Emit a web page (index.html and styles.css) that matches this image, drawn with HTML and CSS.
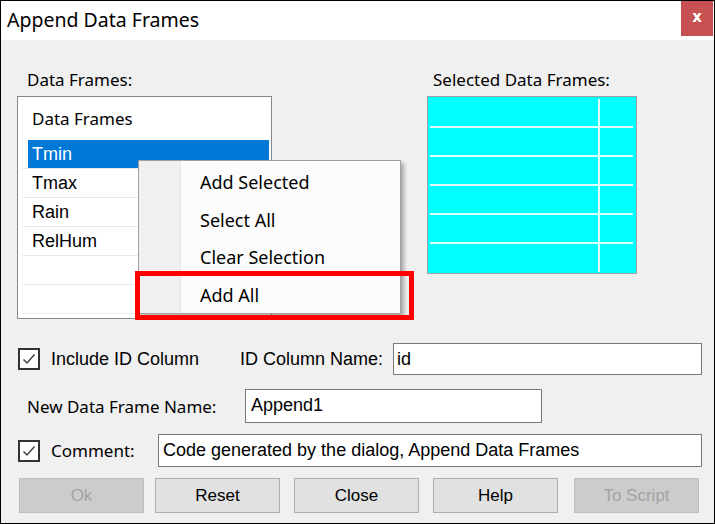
FILE: index.html
```html
<!DOCTYPE html>
<html>
<head>
<meta charset="utf-8">
<link rel="stylesheet" href="styles.css">
</head>
<body>
<div class="window">
  <div class="titlebar">
    <div class="title">Append Data Frames</div>
    <div class="close">x</div>
  </div>
  <div class="content">
    <div class="lists">
      <div class="col-left">
        <div class="label ui lbl-left">Data Frames:</div>
        <div class="listbox">
          <div class="lb-header ui">Data Frames</div>
          <div class="lb-row"><div class="lb-cell selected">Tmin</div></div>
          <div class="lb-row"><div class="lb-cell">Tmax</div></div>
          <div class="lb-row"><div class="lb-cell">Rain</div></div>
          <div class="lb-row"><div class="lb-cell">RelHum</div></div>
          <div class="lb-row"><div class="lb-cell"></div></div>
          <div class="lb-row"><div class="lb-cell"></div></div>
        </div>
      </div>
      <div class="col-right">
        <div class="label ui lbl-right">Selected Data Frames:</div>
        <div class="grid-box">
          <div class="gcell"></div><div class="gcell gcell-r"></div>
          <div class="gcell"></div><div class="gcell gcell-r"></div>
          <div class="gcell"></div><div class="gcell gcell-r"></div>
          <div class="gcell"></div><div class="gcell gcell-r"></div>
          <div class="gcell"></div><div class="gcell gcell-r"></div>
          <div class="gcell last"></div><div class="gcell gcell-r last"></div>
        </div>
      </div>
    </div>

    <div class="row row1">
      <div class="check-wrap w-include">
        <span class="checkbox"><svg width="16" height="16" viewBox="0 0 16 16"><polyline points="2.5,8.5 6,12 13.5,3.5" fill="none" stroke="#444" stroke-width="1.5"/></svg></span>
        <span class="ms">Include ID Column</span>
      </div>
      <div class="ms id-label">ID Column Name:</div>
      <div class="input input-id ms">id</div>
    </div>

    <div class="row row2">
      <div class="ui name-label">New Data Frame Name:</div>
      <div class="input input-name ms">Append1</div>
    </div>

    <div class="row row3">
      <div class="check-wrap w-comment">
        <span class="checkbox"><svg width="16" height="16" viewBox="0 0 16 16"><polyline points="2.5,8.5 6,12 13.5,3.5" fill="none" stroke="#444" stroke-width="1.5"/></svg></span>
        <span class="ui">Comment:</span>
      </div>
      <div class="input input-comment ms">Code generated by the dialog, Append Data Frames</div>
    </div>

    <div class="buttons">
      <div class="btn disabled btn-first">Ok</div>
      <div class="btn">Reset</div>
      <div class="btn">Close</div>
      <div class="btn">Help</div>
      <div class="btn disabled btn-last">To Script</div>
    </div>
  </div>

  <div class="menu ui">
    <div class="menu-item">Add Selected</div>
    <div class="menu-item">Select All</div>
    <div class="menu-item">Clear Selection</div>
    <div class="menu-item">Add All</div>
  </div>
  <div class="highlight"></div>
</div>
</body>
</html>
```

FILE: styles.css
```css
* { box-sizing: border-box; }
html, body { margin: 0; padding: 0; background: #f0f0f0; }
body { width: 715px; height: 524px; overflow: hidden; }

.ui { font-family: "Noto Sans", "Open Sans", sans-serif; }
.ms { font-family: "Liberation Sans", Arial, sans-serif; }

.window {
  position: relative;
  width: 715px;
  height: 524px;
  border: 1px solid #000;
  display: flex;
  flex-direction: column;
  background: #f0f0f0;
}

.titlebar {
  height: 39px;
  background: #fff;
  display: flex;
  justify-content: space-between;
  align-items: flex-start;
}
.title {
  font-family: "Noto Sans", "Open Sans", sans-serif;
  font-size: 19.5px;
  line-height: 38px;
  padding-left: 6px;
  color: #000;
}
.close {
  width: 32px;
  height: 35px;
  margin-right: 1px;
  background: #c75050;
  color: #fff;
  font-family: "DejaVu Sans", sans-serif;
  font-weight: bold;
  font-size: 15px;
  line-height: 33px;
  text-align: center;
}

.content {
  flex: 1;
  display: flex;
  flex-direction: column;
  padding: 0 0 0 16px;
}

.lists {
  display: flex;
  padding-top: 28px;
}
.label {
  font-size: 17px;
  line-height: 24px;
  height: 24px;
  margin-bottom: 4px;
  color: #000;
}
.lbl-left { padding-left: 10px; }
.lbl-right { padding-left: 6px; }

.listbox {
  width: 255px;
  height: 223px;
  border: 1px solid #828790;
  background: #fff;
}
.lb-header {
  height: 43px;
  padding: 11px 0 0 14px;
  font-size: 17px;
  line-height: 22px;
}
.lb-row {
  height: 29px;
  margin: 0 2px 0 4px;
  border-bottom: 1px solid #e9e9e9;
}
.lb-cell {
  height: 28px;
  margin-left: 6px;
  padding-left: 4px;
  font-family: "Liberation Sans", Arial, sans-serif;
  font-size: 18px;
  line-height: 28px;
  color: #000;
}
.lb-cell.selected {
  background: #0078d7;
  color: #fff;
}

.col-right { margin-left: 155px; }
.grid-box {
  width: 210px;
  height: 178px;
  border: 1px solid #a0a0a0;
  background: #00ffff;
  padding: 2px 3px 1px 2px;
  display: grid;
  grid-template-columns: 168px 1fr;
  grid-template-rows: 29px 29px 29px 29px 29px 1fr;
}
.gcell { border-bottom: 2px solid #dcffff; }
.gcell-r { border-left: 2px solid #dcffff; }
.gcell.last { border-bottom: none; }

.row {
  display: flex;
  align-items: center;
}
.row1 { margin-top: 24px; height: 32px; }
.row2 { margin-top: 14px; height: 34px; }
.row3 { margin-top: 11px; height: 33px; }

.check-wrap {
  display: flex;
  align-items: center;
  font-size: 18px;
  padding-left: 1px;
}
.w-include { width: 223px; }
.w-comment { width: 141px; }
.checkbox {
  width: 22px;
  height: 22px;
  border: 2px solid #333;
  background: #fff;
  margin-right: 11px;
  display: flex;
  align-items: center;
  justify-content: center;
}
.ms, .check-wrap .ms { font-size: 18px; }
.check-wrap .ui { font-size: 17px; }

.id-label { width: 153px; font-size: 18px; }
.name-label { width: 228px; padding-left: 10px; font-size: 17px; }

.input {
  height: 100%;
  border: 1px solid #7a7a7a;
  background: #fff;
  font-size: 18px;
  line-height: 30px;
  padding-left: 3px;
  color: #000;
  white-space: nowrap;
}
.input-id { width: 309px; }
.input-name { width: 297px; padding-left: 5px; }
.input-comment { width: 544px; padding-left: 4px; }

.buttons {
  display: flex;
  gap: 14px;
  margin-top: 11px;
  padding-left: 2px;
}
.btn {
  width: 125px;
  height: 35px;
  border: 1px solid #adadad;
  background: #e1e1e1;
  font-family: "Liberation Sans", Arial, sans-serif;
  font-size: 17px;
  line-height: 33px;
  text-align: center;
  color: #000;
}
.btn-first { margin-right: -3px; }
.btn-last { margin-left: 2px; }
.btn.disabled {
  background: #cccccc;
  border-color: #bfbfbf;
  color: #a3a3a3;
}

.menu {
  position: absolute;
  left: 137px;
  top: 159px;
  width: 263px;
  height: 154px;
  border: 1px solid #a0a0a0;
  background: linear-gradient(to right, #f0f0f0 0, #f0f0f0 41px, #e4e4e4 41px, #e4e4e4 42px, #fcfcfc 42px);
  box-shadow: 3px 3px 4px rgba(0,0,0,0.3);
  padding-top: 3px;
}
.menu-item {
  height: 37.5px;
  line-height: 37.5px;
  padding-left: 61px;
  font-size: 18px;
  color: #000;
}

.highlight {
  position: absolute;
  left: 134px;
  top: 270px;
  width: 279px;
  height: 49px;
  border: 5px solid #ff0000;
}
```
